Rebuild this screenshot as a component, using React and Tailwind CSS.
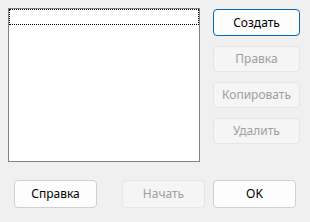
import React from "react";

// Windows-style dialog button
const DlgButton = ({ children, disabled, isDefault, className = "" }) => {
  let look = "border-[#d0d0d0] bg-[#fdfdfd] text-black";
  if (disabled) look = "border-[#e5e5e5] bg-[#f5f5f5] text-[#a0a0a0]";
  if (isDefault) look = "border-[#0067c0] bg-[#fdfdfd] text-black";
  return (
    <button
      type="button"
      disabled={disabled}
      className={`flex items-center justify-center rounded-[4px] border text-[12px] leading-none ${look} ${className}`}
    >
      {children}
    </button>
  );
};

export default function App() {
  return (
    <div
      className="flex h-[222px] w-[310px] flex-col bg-[#f0f0f0]"
      style={{ fontFamily: '"Segoe UI", "Noto Sans", sans-serif' }}
    >
      <div className="flex pl-[8px] pt-[8px]">
        {/* list box */}
        <div className="h-[154px] w-[192px] border border-[#82828a] bg-white">
          <div className="h-[16px] border border-dotted border-black" />
        </div>

        <div className="ml-[13px] mt-px flex flex-col">
          <DlgButton isDefault className="h-[27px] w-[87px]">Создать</DlgButton>
          <DlgButton disabled className="mt-[10px] h-[26px] w-[87px]">Правка</DlgButton>
          <DlgButton disabled className="mt-[10px] h-[26px] w-[87px]">Копировать</DlgButton>
          <DlgButton disabled className="mt-[10px] h-[26px] w-[87px]">Удалить</DlgButton>
        </div>
      </div>

      <div className="mt-[18px] flex pl-[14px]">
        <DlgButton className="h-[28px] w-[83px]">Справка</DlgButton>
        <DlgButton disabled className="ml-[25px] h-[28px] w-[83px]">Начать</DlgButton>
        <DlgButton className="ml-[8px] h-[28px] w-[83px]">OK</DlgButton>
      </div>
    </div>
  );
}
